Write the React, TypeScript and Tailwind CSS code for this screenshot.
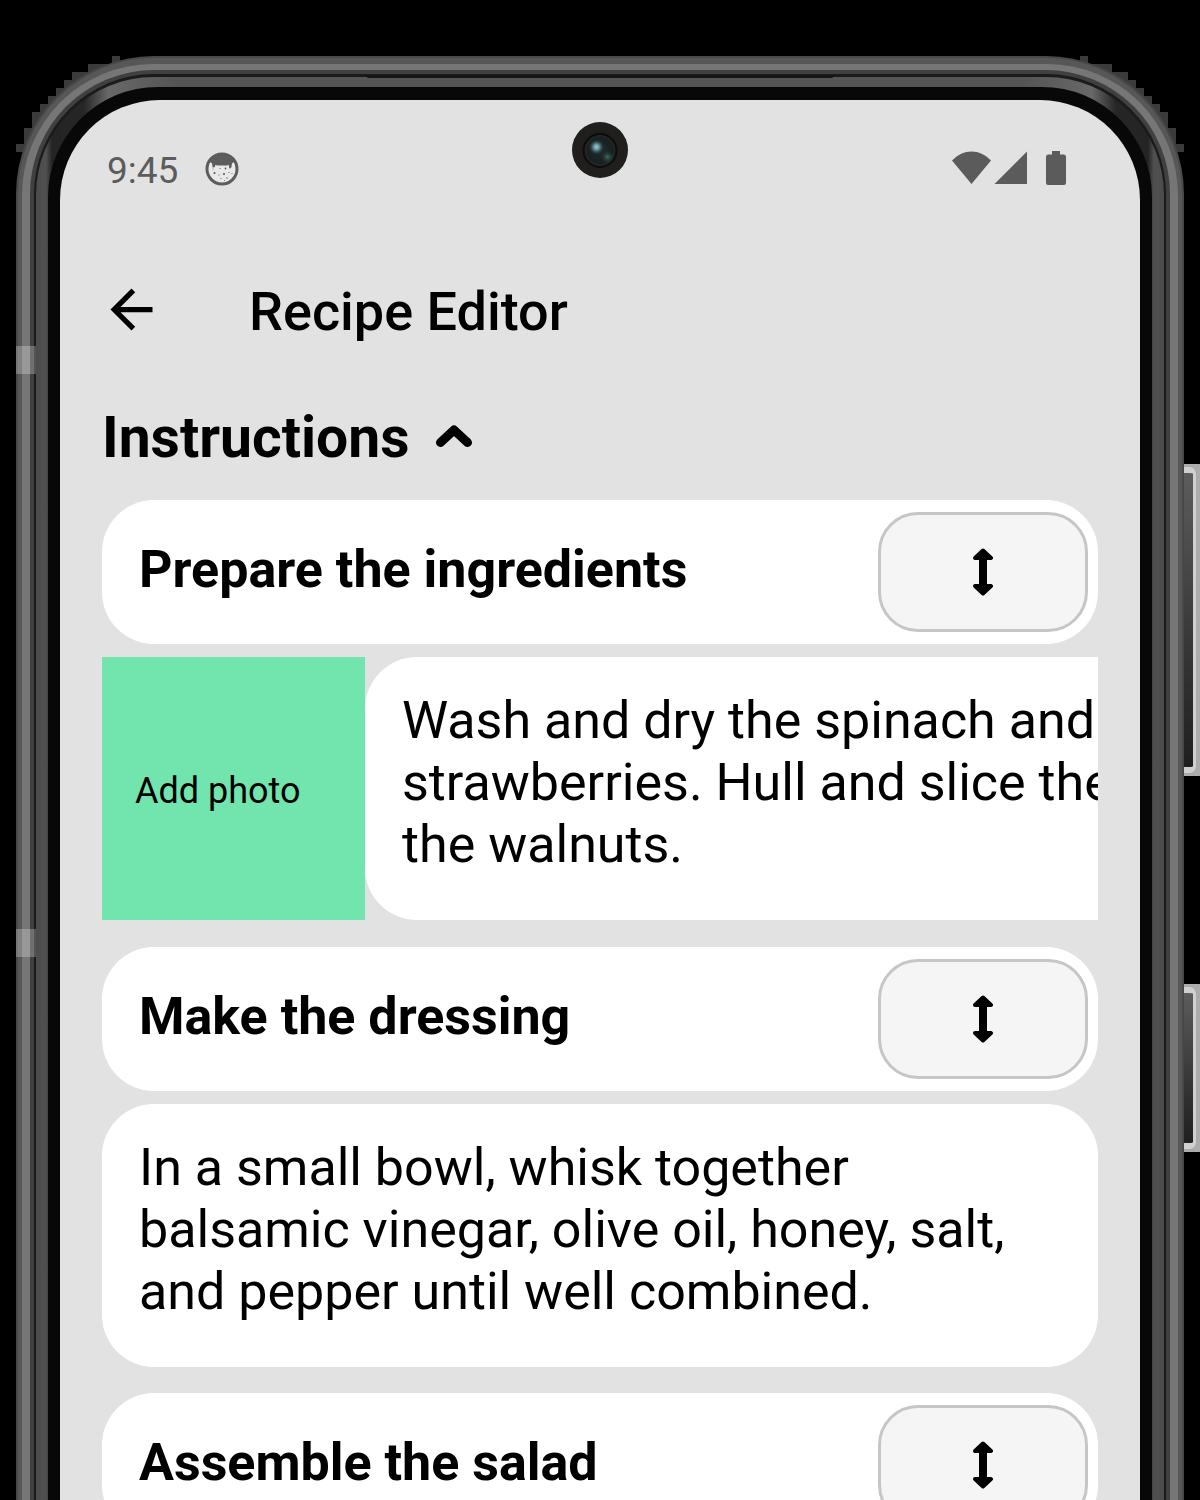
import type { ReactNode } from "react";
import { MdArrowBack } from "react-icons/md";

function PupIcon() {
  return (
    <svg viewBox="0 0 34 34" className="size-[34px]" aria-hidden="true">
      <circle cx="17" cy="17" r="15" fill="#e9e9e9" stroke="#5c5c5c" strokeWidth="3" />
      <path
        d="M4 9.500C7.500 4 12 2 17 2s9.500 2 13 7.500l-3 1.800-.6 4.200-2-.2-.8-2.300c-2.200.8-3 .6-6.600.6s-4.400.2-6.600-.6l-.8 2.300-2 .2-.6-4.200z"
        fill="#5c5c5c"
      />
      <g fill="#5c5c5c">
        <circle cx="20.500" cy="16.500" r=".9" />
        <circle cx="25" cy="15.500" r=".9" />
        <circle cx="9.500" cy="21" r="1.100" />
        <circle cx="19" cy="22" r="1.100" />
        <circle cx="15" cy="16.500" r=".6" />
        <circle cx="24" cy="20.500" r=".6" />
        <circle cx="14" cy="23" r=".6" />
        <circle cx="16" cy="26.500" r=".6" />
        <circle cx="22" cy="26" r=".7" />
        <circle cx="8" cy="17" r=".5" />
        <circle cx="27" cy="21.500" r=".5" />
        <circle cx="19.500" cy="28.500" r=".5" />
      </g>
    </svg>
  );
}

function StatusIcons() {
  return (
    <div className="flex items-center pb-0.5 text-[#5b5b5b]">
      <svg viewBox="0 0 40 34" className="h-[34px] w-10" fill="currentColor" aria-label="Wi-Fi">
        <path d="M0 9.500C6 3.500 12.500 .5 19.500 .5S33 3.500 39 9.500L19.500 33z" />
      </svg>
      <svg viewBox="0 0 34 34" className="ml-0.5 h-[34px] w-[34px]" fill="currentColor" aria-label="Signal">
        <path d="M33 .5v32.500H.5z" />
      </svg>
      <svg viewBox="0 0 20 34" className="ml-[18px] h-[34px] w-5" fill="currentColor" aria-label="Battery">
        <path d="M6 0h8v3.500h3.500a2.500 2.500 0 0 1 2.500 2.500v26a2 2 0 0 1-2 2H2a2 2 0 0 1-2-2V6a2.500 2.500 0 0 1 2.500-2.500H6z" />
      </svg>
    </div>
  );
}

function MoveIcon() {
  return (
    <svg viewBox="0 0 22 48" className="h-12 w-[22px]" aria-hidden="true">
      <g fill="#000" stroke="#000" strokeWidth="4" strokeLinejoin="round">
        <path d="M11 2.500l8 7.500H3z" />
        <path d="M11 45.500l8-7.500H3z" />
      </g>
      <path d="M7 10h8v28H7z" />
    </svg>
  );
}

function Camera() {
  return (
    <svg
      viewBox="0 0 56 56"
      className="absolute left-1/2 top-[22px] size-14 -translate-x-1/2"
      aria-hidden="true"
    >
      <defs>
        <radialGradient id="lens">
          <stop offset="0" stopColor="#1f2b2e" />
          <stop offset="0.75" stopColor="#182021" />
          <stop offset="1" stopColor="#262a2a" />
        </radialGradient>
        <radialGradient id="glint">
          <stop offset="0" stopColor="#a5cfda" />
          <stop offset="0.4" stopColor="#5b8792" />
          <stop offset="1" stopColor="#1f2b2e" stopOpacity="0" />
        </radialGradient>
        <radialGradient id="glow">
          <stop offset="0" stopColor="#3f6f60" />
          <stop offset="1" stopColor="#1f2b2e" stopOpacity="0" />
        </radialGradient>
      </defs>
      <circle cx="28" cy="28" r="28" fill="#211f1e" />
      <circle cx="28" cy="28.500" r="16.500" fill="url(#lens)" stroke="#0b0b0b" strokeWidth="2" />
      <circle cx="35.500" cy="35" r="7" fill="url(#glow)" />
      <circle cx="24.500" cy="25" r="8" fill="url(#glint)" />
    </svg>
  );
}

function FrameCorner({ className }: { className: string }) {
  return (
    <svg viewBox="0 0 104 96" className={className} fill="#3b3b3b" aria-hidden="true">
      <path d="M104 0H96V8H72V16H56V24H48V32H40V40H32V48H24V56H16V72H8V88H0V96H104z" />
    </svg>
  );
}

function SideButton({ className }: { className: string }) {
  return (
    <div className={className}>
      <div className="my-[3px] w-3 rounded-r-[7px] border-y-[6px] border-r-[3px] border-[#d0d0d0] bg-linear-to-b from-[#5c5c5c] to-[#1f1f1f]" />
    </div>
  );
}

function PhoneFrame({ children }: { children: ReactNode }) {
  return (
    <div className="relative mx-4 mt-14">
      <FrameCorner className="absolute left-0 top-0 h-24 w-26" />
      <FrameCorner className="absolute right-0 top-0 h-24 w-26 -scale-x-100" />
      <SideButton className="absolute -right-4 top-[408px] flex h-[312px] w-4 bg-[#acacac]" />
      <SideButton className="absolute -right-4 top-[928px] flex h-[168px] w-4 bg-[#acacac]" />
      <div className="relative rounded-t-[138px] bg-[#484848] px-[2px] pt-[2px]">
        <div className="rounded-t-[136px] bg-[#575757] px-1 pt-[6px]">
          <div className="rounded-t-[131px] bg-[#767676] px-2 pt-[6px]">
            <div className="rounded-t-[124px] bg-[#404040] px-1 pt-1">
              <div className="rounded-t-[120px] bg-[#1b1b1b] px-[2px] pt-[3px]">
                <div className="rounded-t-[118px] bg-linear-[90deg,#4c4c4c,#505050_10px,#242424_16px,#262626_48px,#686868_72px,#555_140px,#555_calc(100%-140px),#686868_calc(100%-72px),#262626_calc(100%-48px),#242424_calc(100%-16px),#505050_calc(100%-10px),#4c4c4c] px-3 pt-[10px]">
                  <div className="rounded-t-[110px] bg-[#080808] px-3 pt-[13px]">
                    <div className="relative rounded-t-[100px] bg-[#e2e2e2]">{children}</div>
                  </div>
                </div>
              </div>
            </div>
          </div>
        </div>
      </div>
      <div className="absolute inset-x-[350px] top-[19px] h-[3px] rounded-b bg-[#161616]" />
      <div className="absolute left-0 top-[290px] h-7 w-5 bg-white/25" />
      <div className="absolute left-0 top-[873px] h-7 w-5 bg-white/25" />
    </div>
  );
}

function StepTitle({ title }: { title: string }) {
  return (
    <div className="flex h-36 items-center justify-between rounded-[52px] bg-white pl-[37px] pr-[10px]">
      <h3 className="pb-1 text-[52px] leading-[62px] font-bold">{title}</h3>
      <button
        type="button"
        aria-label={`Move ${title}`}
        className="flex h-[120px] w-[210px] items-center justify-center rounded-[40px] border-3 border-[#c6c6c6] bg-[#f5f5f5]"
      >
        <MoveIcon />
      </button>
    </div>
  );
}

export default function App() {
  return (
    <div className="h-screen overflow-hidden bg-black font-[Roboto,sans-serif] text-black">
      <PhoneFrame>
        <Camera />
        <header>
          <div className="flex items-center justify-between pt-[49px] pr-[74px] pl-[47px]">
            <div className="flex items-center gap-[27px]">
              <span className="pt-1 text-[37px] leading-9 text-[#5c5c5c]">9:45</span>
              <PupIcon />
            </div>
            <StatusIcons />
          </div>
          <div className="flex items-center pt-[89px] pl-10">
            <button type="button" aria-label="Back" className="pb-[5px]">
              <MdArrowBack className="size-[63px]" />
            </button>
            <h1 className="ml-[86px] text-[54px] leading-[68px] font-medium">Recipe Editor</h1>
          </div>
        </header>
        <main className="px-[42px] pb-20">
          <h2 className="pt-[58px] pb-7">
            <button type="button" aria-expanded="true" className="flex items-center gap-[26px] text-[57px] leading-[68px] font-bold">
              Instructions
              <svg viewBox="0 0 38 26" className="mb-1 h-[26px] w-[38px]" fill="none" stroke="#000" aria-hidden="true">
                <path d="M5.500 19.500L19 7l13.500 12.500" strokeWidth="9" strokeLinecap="round" strokeLinejoin="round" />
              </svg>
            </button>
          </h2>
          <section>
            <StepTitle title="Prepare the ingredients" />
            <div className="mt-[13px] flex overflow-hidden">
              <button type="button" className="w-[263px] shrink-0 bg-[#72e5ae] pt-1 pl-[33px] text-left text-[36px] leading-[44px]">
                Add photo
              </button>
              <p className="w-full shrink-0 rounded-[52px] bg-white px-[37px] pt-[33px] pb-11 text-[52px] leading-[62px]">
                Wash and dry the spinach and strawberries. Hull and slice them. Chop the walnuts.
              </p>
            </div>
          </section>
          <section className="mt-[27px]">
            <StepTitle title="Make the dressing" />
            <p className="mt-[13px] rounded-[52px] bg-white px-[37px] pt-[33px] pb-11 text-[52px] leading-[62px]">
              In a small bowl, whisk together balsamic vinegar, olive oil, honey, salt, and pepper until well combined.
            </p>
          </section>
          <section className="mt-[26px]">
            <StepTitle title="Assemble the salad" />
          </section>
        </main>
      </PhoneFrame>
    </div>
  );
}
